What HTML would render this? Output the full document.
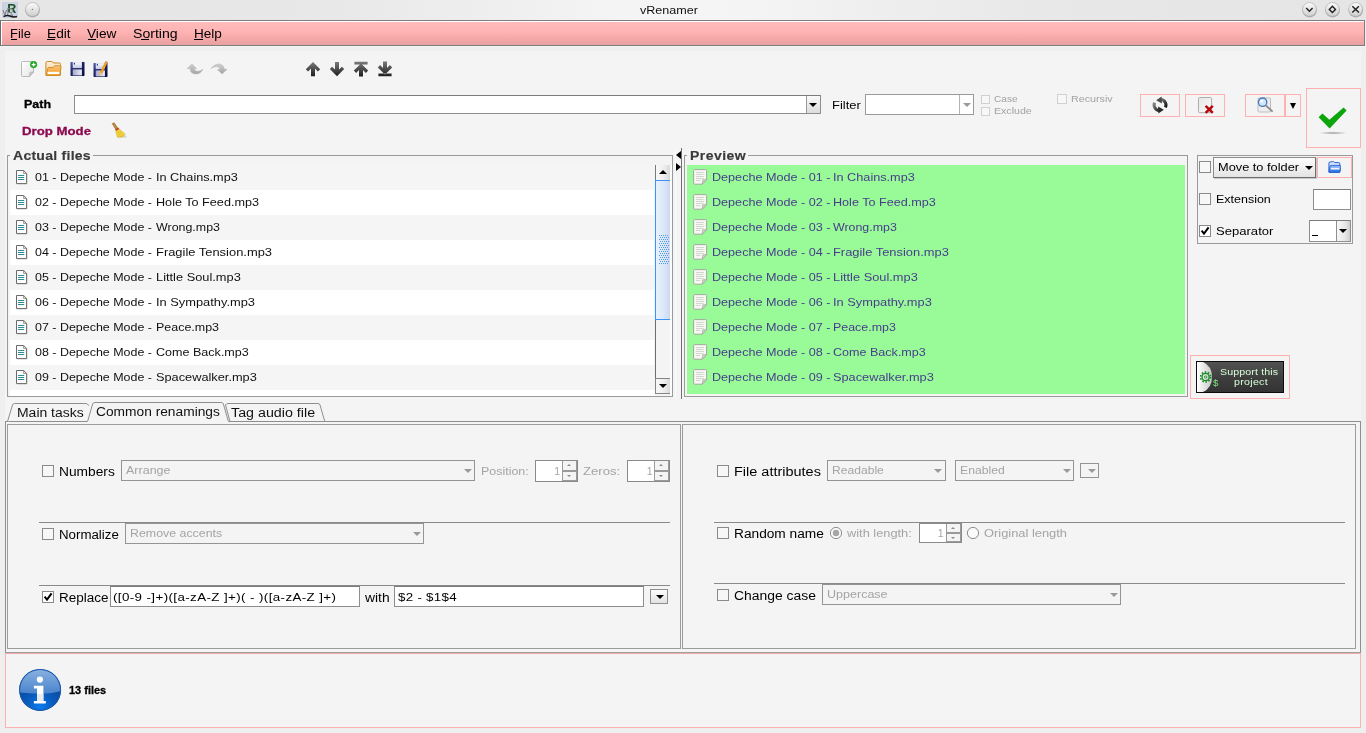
<!DOCTYPE html>
<html><head><meta charset="utf-8"><title>vRenamer</title>
<style>
html,body{margin:0;padding:0;}
body{width:1366px;height:733px;overflow:hidden;position:relative;background:#efefef;font-family:"Liberation Sans",sans-serif;font-size:12px;color:#000;}
div,span,svg{position:absolute;box-sizing:border-box;}
.t{white-space:pre;line-height:16px;height:16px;transform-origin:0 0;}
.u{text-decoration:underline;position:static;}
.cb{width:12px;height:12px;background:#f7f7f7;border:1px solid #8a8a8a;}
.cbd{width:10px;height:10px;background:#f7f7f7;border:1px solid #d0d0d0;}
.inp{background:#fff;border:1px solid #8e8e8e;border-top-color:#7c7c7c;}
.cmb{background:#f4f4f4;border:1px solid #949494;}
.pk{border:1px solid #ffb1b1;background:#f4f4f4;}
.sep{height:1px;background:#8a8a8a;}
.row{left:10px;width:644px;height:25px;}
.tri{width:0;height:0;border-left:4px solid transparent;border-right:4px solid transparent;border-top:4px solid #9a9a9a;}
.trib{width:0;height:0;border-left:4px solid transparent;border-right:4px solid transparent;border-top:4px solid #000;}

</style></head>
<body>
<div id="root" style="left:0;top:0;width:1366px;height:733px;will-change:transform;">
<div style="left:0px;top:0px;width:1366px;height:20px;background:linear-gradient(90deg,#e5e5e5 0,#e8e8e8 24%,#f5f5f5 47%,#f5f5f5 53%,#e8e8e8 76%,#e5e5e5 100%);"></div>
<span class="t" style="left:640.36px;top:2.02px;font-size:11.5px;font-weight:400;color:#111;transform:scaleX(1.0931);">vRenamer</span>
<svg style="left:2px;top:2px" width="16" height="16" viewBox="0 0 16 16">
<rect x="0" y="0" width="16" height="16" fill="#cdd1e4"/>
<text x="5.2" y="10.6" font-family="Liberation Sans" font-weight="700" font-size="12.5" fill="#14521f">R</text>
<text x="0.6" y="13.4" font-family="Liberation Sans" font-size="9" fill="#666">v</text>
<text x="4.6" y="14.2" font-family="Liberation Sans" font-size="10" fill="#8a8a8a">R</text>
<path d="M1.6 14.6 Q5 12.6 8 14 T15 14.6" stroke="#1a1a1a" stroke-width="1.5" fill="none"/>
</svg>
<svg style="left:23px;top:0px" width="19" height="19" viewBox="-9.40 -9.40 19 19">
<defs><linearGradient id="wg32" x1="0" y1="0" x2="0" y2="1"><stop offset="0" stop-color="#fbfbfb"/><stop offset="1" stop-color="#cfcfcf"/></linearGradient></defs>
<circle cx="0.2" cy="0.7" r="7.3" fill="#a8a8a8"/><circle cx="0" cy="0" r="6.9" fill="url(#wg32)" stroke="#b0b0b0" stroke-width="0.7"/><circle cx="0" cy="0" r="0.7" fill="#777"/></svg>
<svg style="left:1300px;top:0px" width="19" height="19" viewBox="-9.40 -9.40 19 19">
<defs><linearGradient id="wg1309" x1="0" y1="0" x2="0" y2="1"><stop offset="0" stop-color="#fbfbfb"/><stop offset="1" stop-color="#cfcfcf"/></linearGradient></defs>
<circle cx="0.2" cy="0.7" r="7.3" fill="#a8a8a8"/><circle cx="0" cy="0" r="6.9" fill="url(#wg1309)" stroke="#b0b0b0" stroke-width="0.7"/><path d="M-3.2 -1.4 L0 1.9 L3.2 -1.4" stroke="#222" stroke-width="1.4" fill="none"/></svg>
<svg style="left:1323px;top:0px" width="19" height="19" viewBox="-9.40 -9.40 19 19">
<defs><linearGradient id="wg1332" x1="0" y1="0" x2="0" y2="1"><stop offset="0" stop-color="#fbfbfb"/><stop offset="1" stop-color="#cfcfcf"/></linearGradient></defs>
<circle cx="0.2" cy="0.7" r="7.3" fill="#a8a8a8"/><circle cx="0" cy="0" r="6.9" fill="url(#wg1332)" stroke="#b0b0b0" stroke-width="0.7"/><path d="M0 -3.1 L3.1 0 L0 3.1 L-3.1 0 Z" stroke="#222" stroke-width="1.4" fill="none"/></svg>
<svg style="left:1346px;top:0px" width="19" height="19" viewBox="-9.60 -9.40 19 19">
<defs><linearGradient id="wg1355" x1="0" y1="0" x2="0" y2="1"><stop offset="0" stop-color="#fbfbfb"/><stop offset="1" stop-color="#cfcfcf"/></linearGradient></defs>
<circle cx="0.2" cy="0.7" r="7.3" fill="#a8a8a8"/><circle cx="0" cy="0" r="6.9" fill="url(#wg1355)" stroke="#b0b0b0" stroke-width="0.7"/><path d="M-3.3 -3.1 L3.3 3.1 M3.3 -3.1 L-3.3 3.1" stroke="#222" stroke-width="1.5" fill="none"/></svg>
<div style="left:0px;top:20px;width:1365px;height:26px;background:linear-gradient(#ffbcbc 0%,#ffb3b3 45%,#f2a6a6 80%,#e8a0a0 100%);border:1px solid #7d7d7d;border-left-color:#6a6a6a;"></div>
<div style="left:1px;top:21px;width:1363px;height:1px;background:#fff;"></div>
<div style="left:1px;top:21px;width:1px;height:24px;background:#fff;"></div>
<span class="t" style="left:9.85px;top:25.67px;font-size:12.5px;font-weight:400;color:#000;transform:scaleX(1.0357);">File</span>
<div style="left:10.5px;top:39px;width:6.5px;height:1px;background:#000;"></div>
<span class="t" style="left:46.62px;top:25.67px;font-size:12.5px;font-weight:400;color:#000;transform:scaleX(1.0988);">Edit</span>
<div style="left:47.3px;top:39px;width:7.5px;height:1px;background:#000;"></div>
<span class="t" style="left:87.12px;top:25.67px;font-size:12.5px;font-weight:400;color:#000;transform:scaleX(1.0930);">View</span>
<div style="left:87.8px;top:39px;width:8px;height:1px;background:#000;"></div>
<span class="t" style="left:133.01px;top:25.67px;font-size:12.5px;font-weight:400;color:#000;transform:scaleX(1.1279);">Sorting</span>
<div style="left:141.2px;top:39px;width:7.5px;height:1px;background:#000;"></div>
<span class="t" style="left:193.73px;top:25.67px;font-size:12.5px;font-weight:400;color:#000;transform:scaleX(1.0838);">Help</span>
<div style="left:194.4px;top:39px;width:8.5px;height:1px;background:#000;"></div>
<div style="left:0px;top:46px;width:1366px;height:5px;background:linear-gradient(#f5f5f5 0,#f5f5f5 20%,#efefef 21%,#efefef 100%);"></div>
<div style="left:5px;top:51px;width:1356px;height:677px;background:#f4f4f4;"></div>
<svg style="left:21px;top:61px" width="17" height="16" viewBox="0 0 17 16">
<defs><linearGradient id="pg1" x1="0" y1="0" x2="1" y2="1"><stop offset="0" stop-color="#ffffff"/><stop offset="1" stop-color="#e4e4e4"/></linearGradient></defs>
<path d="M0.5 1.5 Q0.5 0.5 1.5 0.5 H11.5 Q12.5 0.5 12.5 1.5 V11 L8.5 15.5 H1.5 Q0.5 15.5 0.5 14.5 Z" fill="url(#pg1)" stroke="#b9b9b9"/>
<path d="M12.5 11 L9 11.2 L8.5 15.5 Z" fill="#cfcfcf" stroke="#a8a8a8" stroke-width="0.6"/>
<circle cx="12.6" cy="3.6" r="3.3" fill="#1fb024" stroke="#168a1a" stroke-width="0.5"/>
<path d="M12.6 1.7 V5.5 M10.7 3.6 H14.5" stroke="#fff" stroke-width="1.2"/>
</svg>
<svg style="left:45px;top:60px" width="17" height="17" viewBox="0 0 17 17">
<defs><linearGradient id="fg0" x1="0" y1="0" x2="0" y2="1"><stop offset="0" stop-color="#fef1de"/><stop offset="1" stop-color="#f9c480"/></linearGradient>
<linearGradient id="fg1" x1="0" y1="0" x2="0" y2="1"><stop offset="0" stop-color="#fcc77c"/><stop offset="1" stop-color="#f7961a"/></linearGradient></defs>
<path d="M0.9 15.2 V3 Q0.9 1.5 2.3 1.5 H6.6 Q7.8 1.5 8.4 3 H14.4 Q15.5 3 15.5 4.2 V15.2 Z" fill="url(#fg0)" stroke="#c98a22" stroke-width="1"/>
<path d="M1.2 15.4 L2.7 8.4 Q2.9 7.6 3.8 7.6 L8 7.5 L9.8 5.8 H15.4 Q16.3 5.8 16.1 6.8 L15 14.6 Q14.9 15.4 14 15.4 Z" fill="url(#fg1)" stroke="#c98a22" stroke-width="0.9"/>
<rect x="2.6" y="11.8" width="11.8" height="2.3" fill="#ffffff"/>
</svg>
<svg style="left:69.6px;top:61.2px" width="16" height="17" viewBox="0 0 16 17">
<defs><linearGradient id="sv69_6" x1="0" y1="0" x2="1" y2="1"><stop offset="0" stop-color="#5560a6"/><stop offset="0.35" stop-color="#20286a"/><stop offset="1" stop-color="#090c3c"/></linearGradient>
<linearGradient id="sl69_6" x1="0" y1="0" x2="0" y2="1"><stop offset="0" stop-color="#ffffff"/><stop offset="1" stop-color="#c2c8e2"/></linearGradient>
<linearGradient id="sm69_6" x1="0" y1="0" x2="1" y2="0"><stop offset="0" stop-color="#a4a7cc"/><stop offset="1" stop-color="#eeeef7"/></linearGradient></defs>
<g transform="translate(0 0)">
<rect x="0.5" y="0.9" width="14" height="14" rx="0.7" fill="url(#sv69_6)"/>
<rect x="2.7" y="1.1" width="9.2" height="6" fill="url(#sl69_6)"/>
<rect x="3.8" y="1.8" width="1.2" height="1.7" fill="#27358a"/>
<rect x="2.7" y="8.4" width="9.2" height="6" fill="url(#sm69_6)"/></g></svg>
<svg style="left:92.6px;top:61.2px" width="16" height="17" viewBox="0 0 16 17">
<defs><linearGradient id="sv92_6" x1="0" y1="0" x2="1" y2="1"><stop offset="0" stop-color="#5560a6"/><stop offset="0.35" stop-color="#20286a"/><stop offset="1" stop-color="#090c3c"/></linearGradient>
<linearGradient id="sl92_6" x1="0" y1="0" x2="0" y2="1"><stop offset="0" stop-color="#ffffff"/><stop offset="1" stop-color="#c2c8e2"/></linearGradient>
<linearGradient id="sm92_6" x1="0" y1="0" x2="1" y2="0"><stop offset="0" stop-color="#a4a7cc"/><stop offset="1" stop-color="#eeeef7"/></linearGradient></defs>
<g transform="translate(0 1)">
<rect x="0.5" y="0.9" width="14" height="14" rx="0.7" fill="url(#sv92_6)"/>
<rect x="2.7" y="1.1" width="9.2" height="6" fill="url(#sl92_6)"/>
<rect x="3.8" y="1.8" width="1.2" height="1.7" fill="#27358a"/>
<rect x="2.7" y="8.4" width="9.2" height="6" fill="url(#sm92_6)"/></g><path d="M12.8 0.3 L14.6 1.2 L8.8 12.6 L6.6 14.2 L7 11.6 Z" fill="#f8a821" stroke="#c87f14" stroke-width="0.5"/><path d="M7 11.6 L8.8 12.6 L6.6 14.2 Z" fill="#f4dcb4"/><path d="M12.8 0.3 L14.6 1.2 L14 2.4 L12.2 1.5Z" fill="#ec8a70"/></svg>
<svg style="left:186px;top:62px" width="18" height="14" viewBox="0 0 18 14">
<defs><linearGradient id="ug" x1="0" y1="0" x2="0" y2="1"><stop offset="0" stop-color="#cfcfcf"/><stop offset="1" stop-color="#a4a4a4"/></linearGradient></defs>
<path d="M5.9 1.9 L10.7 6.6 H8.2 Q8.6 9.4 12 9.2 Q14.6 9 16.9 7.2 Q15.4 11 11.4 11.9 Q7 12.6 5 10 Q4.2 8.6 4.3 6.6 H1.1 Z" fill="url(#ug)" stroke="#b4b4b4" stroke-width="0.5"/></svg>
<svg style="left:210px;top:62px" width="18" height="14" viewBox="0 0 18 14">
<path d="M1.1 6.6 Q4 2.2 8.6 1.9 Q13.6 2 14.4 7.3 L17.1 7.2 L12.1 12 L7.3 7.6 L10.2 7.5 Q9.4 4.6 6.4 4.6 Q3.6 4.8 1.1 6.6 Z" fill="url(#ug)" stroke="#b4b4b4" stroke-width="0.5"/></svg>
<svg style="left:305px;top:61px" width="16" height="16" viewBox="0 0 16 16"><defs><linearGradient id="ag305" x1="0" y1="0" x2="0" y2="1"><stop offset="0" stop-color="#7a7a7a"/><stop offset="1" stop-color="#1e1e1e"/></linearGradient></defs><path d="M8 1 L15.2 8.2 L12.9 10.5 L10 7.6 V15.2 H6 V7.6 L3.1 10.5 L0.8 8.2 Z" fill="url(#ag305)"/></svg>
<svg style="left:329px;top:61px" width="16" height="16" viewBox="0 0 16 16"><defs><linearGradient id="ag329" x1="0" y1="0" x2="0" y2="1"><stop offset="0" stop-color="#7a7a7a"/><stop offset="1" stop-color="#1e1e1e"/></linearGradient></defs><path d="M8 15.2 L15.2 8 L12.9 5.7 L10 8.6 V1 H6 V8.6 L3.1 5.7 L0.8 8 Z" fill="url(#ag329)"/></svg>
<svg style="left:353px;top:61px" width="16" height="16" viewBox="0 0 16 16"><defs><linearGradient id="ag353" x1="0" y1="0" x2="0" y2="1"><stop offset="0" stop-color="#7a7a7a"/><stop offset="1" stop-color="#1e1e1e"/></linearGradient></defs><path d="M8 2.4 L15.2 9.6 L12.9 11.9 L10 9 V15.4 H6 V9 L3.1 11.9 L0.8 9.6 Z M1.4 0.8 H14.6 V3.4 H1.4 Z" fill="url(#ag353)"/></svg>
<svg style="left:377px;top:61px" width="16" height="16" viewBox="0 0 16 16"><defs><linearGradient id="ag377" x1="0" y1="0" x2="0" y2="1"><stop offset="0" stop-color="#7a7a7a"/><stop offset="1" stop-color="#1e1e1e"/></linearGradient></defs><path d="M8 13.6 L15.2 6.4 L12.9 4.1 L10 7 V0.6 H6 V7 L3.1 4.1 L0.8 6.4 Z M1.4 12.6 H14.6 V15.2 H1.4 Z" fill="url(#ag377)"/></svg>
<span class="t" style="left:23.86px;top:96.02px;font-size:11.5px;font-weight:700;color:#000;transform:scaleX(1.0836);-webkit-text-stroke:0.3px currentColor;">Path</span>
<div class="inp" style="left:74px;top:95px;width:747px;height:19px;"></div>
<div style="left:806px;top:96px;width:14px;height:17px;background:linear-gradient(#fafafa,#dcdcdc);border-left:1px solid #9a9a9a;"></div>
<div class="trib" style="left:809px;top:103px;width:0px;height:0px;"></div>
<span class="t" style="left:831.55px;top:96.52px;font-size:11.5px;font-weight:400;color:#000;transform:scaleX(1.1268);">Filter</span>
<div class="inp" style="left:865px;top:94px;width:109px;height:21px;background:#fff;border-color:#9a9a9a;"></div>
<div style="left:959px;top:95px;width:1px;height:19px;background:#b4b4b4;"></div>
<div class="tri" style="left:962.6px;top:102.8px;width:0px;height:0px;border-left-width:4.5px;border-right-width:4.5px;border-top-width:4.5px;"></div>
<div class="cbd" style="left:980.5px;top:94.5px;width:9px;height:9px;"></div>
<span class="t" style="left:994.15px;top:90.71px;font-size:9.5px;font-weight:400;color:#a2a2a2;transform:scaleX(1.0666);">Case</span>
<div class="cbd" style="left:980.5px;top:106.5px;width:9px;height:9px;"></div>
<span class="t" style="left:994.13px;top:102.71px;font-size:9.5px;font-weight:400;color:#a2a2a2;transform:scaleX(1.1139);">Exclude</span>
<div class="cbd" style="left:1057px;top:94px;width:10px;height:10px;"></div>
<span class="t" style="left:1071.03px;top:91.21px;font-size:9.5px;font-weight:400;color:#a2a2a2;transform:scaleX(1.1275);">Recursiv</span>
<div class="pk" style="left:1140px;top:94px;width:40px;height:23px;"></div>
<div class="pk" style="left:1185px;top:94px;width:40px;height:23px;"></div>
<div class="pk" style="left:1245px;top:94px;width:40px;height:23px;"></div>
<div class="pk" style="left:1285px;top:94px;width:16px;height:23px;"></div>
<div class="pk" style="left:1306px;top:88px;width:55px;height:60px;"></div>
<svg style="left:1152px;top:96px" width="16" height="18" viewBox="0 0 16 18">
<defs><linearGradient id="rf" x1="0" y1="0" x2="1" y2="1"><stop offset="0" stop-color="#7c7c7c"/><stop offset="1" stop-color="#141414"/></linearGradient>
<linearGradient id="rf2" x1="0" y1="0" x2="1" y2="1"><stop offset="0" stop-color="#8a8a8a"/><stop offset="1" stop-color="#1e1e1e"/></linearGradient></defs>
<g fill="none" stroke-width="3.1">
<path d="M13.4 11.4 A5.6 5.6 0 0 0 8.8 3.5" stroke="url(#rf)"/>
<path d="M2.6 6.6 A5.6 5.6 0 0 0 7.2 14.5" stroke="url(#rf2)"/></g>
<path d="M4.2 4.3 L9.6 0.6 L9.9 7.4 Z" fill="#4a4a4a"/>
<path d="M11.8 13.7 L6.4 17.4 L6.1 10.6 Z" fill="#2a2a2a"/>
</svg>
<svg style="left:1198px;top:97px" width="16" height="17" viewBox="0 0 16 17">
<defs><linearGradient id="dp" x1="0" y1="0" x2="1" y2="1"><stop offset="0" stop-color="#e6e6e6"/><stop offset="1" stop-color="#fbfbfb"/></linearGradient></defs><path d="M0.5 1.7 Q0.5 0.5 1.7 0.5 H12.4 Q13.6 0.5 13.6 1.7 V14.5 Q13.6 15.7 12.4 15.7 H1.7 Q0.5 15.7 0.5 14.5 Z" fill="url(#dp)" stroke="#adadad"/>
<path d="M7.6 8.8 L14.8 15.8 M14.8 8.8 L7.6 15.8" stroke="#b8080e" stroke-width="2.5"/></svg>
<svg style="left:1257px;top:97px" width="17" height="17" viewBox="0 0 17 17">
<path d="M1 2 Q1 1 2 1 H12.5 Q13.5 1 13.5 2 V14 Q13.5 15 12.5 15 H2 Q1 15 1 14 Z" fill="#eeeeee" stroke="#bdbdbd"/>
<path d="M9 8.6 L15.6 14.6" stroke="#8a8a8a" stroke-width="1.8"/>
<circle cx="5.6" cy="5.2" r="4.2" fill="#cfe6fb" stroke="#4a78b8" stroke-width="1.3"/>
<circle cx="4.6" cy="4" r="1.6" fill="#ffffff" opacity="0.8"/></svg>
<div class="trib" style="left:1289.8px;top:103px;width:0px;height:0px;border-left-width:3.5px;border-right-width:3.5px;border-top-width:6px;"></div>
<svg style="left:1316px;top:104px" width="34" height="32" viewBox="0 0 34 32">
<defs><radialGradient id="sh" cx="0.5" cy="0.5" r="0.5"><stop offset="0" stop-color="#777" stop-opacity="0.7"/><stop offset="1" stop-color="#777" stop-opacity="0"/></radialGradient></defs>
<ellipse cx="17" cy="29" rx="14" ry="1.6" fill="url(#sh)"/>
<path d="M2.6 13.2 L6.4 9.4 L13.4 15.8 L27.6 3.6 L30.6 6.6 L13.6 24.4 Z" fill="#0ca60c"/></svg>
<span class="t" style="left:21.84px;top:123.02px;font-size:11.5px;font-weight:700;color:#8b0a50;transform:scaleX(1.1489);-webkit-text-stroke:0.3px currentColor;">Drop Mode</span>
<svg style="left:110px;top:122px" width="18" height="17" viewBox="0 0 18 17">
<ellipse cx="12.6" cy="14.6" rx="4.4" ry="1.2" fill="#9a9a9a" opacity="0.35"/>
<path d="M2.2 1.6 L4.2 0.8 L8.4 7 L6.2 8.2 Z" fill="#c08a3c" stroke="#8a5a1c" stroke-width="0.5"/>
<path d="M5.6 8.4 L8.6 6.6 L15.2 12.2 L13.4 14.2 L10.4 15.2 L7.4 15.2 Z" fill="#f2d43c" stroke="#c8a018" stroke-width="0.5"/>
<path d="M8 9.6 L10.6 14.8 M9.4 9 L13 13.8" stroke="#d8b422" stroke-width="0.6"/>
<path d="M5.2 7.4 L8.2 5.6 L9.2 7 L6.2 8.8 Z" fill="#d0342a"/></svg>
<div style="left:7px;top:155px;width:666px;height:242px;border:1px solid #9a9a9a;"></div><div style="left:10.2px;top:153px;width:82.8px;height:5px;background:#f4f4f4;"></div><span class="t" style="left:12.71px;top:148.01px;font-size:12.1px;font-weight:700;color:#3a3a3a;transform:scaleX(1.1600);letter-spacing:0.219px;-webkit-text-stroke:0.15px currentColor;">Actual files</span>
<div style="left:10px;top:165px;width:644px;height:25px;background:#f5f5f5;"></div>
<svg style="left:16px;top:170px" width="12" height="15" viewBox="0 0 12 15">
<path d="M0.5 0.5 H7.6 L10.5 3.4 V13.5 H0.5 Z" fill="#fdfdfd" stroke="#6a6a6a"/>
<path d="M0.8 13.9 H10.9 V3.6" fill="none" stroke="#8a8a8a" stroke-width="0.6"/>
<path d="M7.6 0.5 V3.4 H10.5 Z" fill="#f6f2cf" stroke="#6a6a6a" stroke-width="0.7"/>
<path d="M2 5.5 H8.2 M2 7.5 H8.2 M2 9.5 H8.2" stroke="#2a8c96" stroke-width="1"/></svg>
<span class="t" style="left:35.36px;top:169.02px;font-size:11.5px;font-weight:400;color:#111;transform:scaleX(1.0829);">01 - Depeche Mode -</span>
<span class="t" style="left:155.76px;top:169.02px;font-size:11.5px;font-weight:400;color:#111;transform:scaleX(1.1031);">In Chains.mp3</span>
<div style="left:10px;top:190px;width:644px;height:25px;background:#ffffff;"></div>
<svg style="left:16px;top:195px" width="12" height="15" viewBox="0 0 12 15">
<path d="M0.5 0.5 H7.6 L10.5 3.4 V13.5 H0.5 Z" fill="#fdfdfd" stroke="#6a6a6a"/>
<path d="M0.8 13.9 H10.9 V3.6" fill="none" stroke="#8a8a8a" stroke-width="0.6"/>
<path d="M7.6 0.5 V3.4 H10.5 Z" fill="#f6f2cf" stroke="#6a6a6a" stroke-width="0.7"/>
<path d="M2 5.5 H8.2 M2 7.5 H8.2 M2 9.5 H8.2" stroke="#2a8c96" stroke-width="1"/></svg>
<span class="t" style="left:35.36px;top:194.02px;font-size:11.5px;font-weight:400;color:#111;transform:scaleX(1.0829);">02 - Depeche Mode -</span>
<span class="t" style="left:155.76px;top:194.02px;font-size:11.5px;font-weight:400;color:#111;transform:scaleX(1.0985);">Hole To Feed.mp3</span>
<div style="left:10px;top:215px;width:644px;height:25px;background:#f5f5f5;"></div>
<svg style="left:16px;top:220px" width="12" height="15" viewBox="0 0 12 15">
<path d="M0.5 0.5 H7.6 L10.5 3.4 V13.5 H0.5 Z" fill="#fdfdfd" stroke="#6a6a6a"/>
<path d="M0.8 13.9 H10.9 V3.6" fill="none" stroke="#8a8a8a" stroke-width="0.6"/>
<path d="M7.6 0.5 V3.4 H10.5 Z" fill="#f6f2cf" stroke="#6a6a6a" stroke-width="0.7"/>
<path d="M2 5.5 H8.2 M2 7.5 H8.2 M2 9.5 H8.2" stroke="#2a8c96" stroke-width="1"/></svg>
<span class="t" style="left:35.36px;top:219.02px;font-size:11.5px;font-weight:400;color:#111;transform:scaleX(1.0829);">03 - Depeche Mode -</span>
<span class="t" style="left:155.77px;top:219.02px;font-size:11.5px;font-weight:400;color:#111;transform:scaleX(1.0805);">Wrong.mp3</span>
<div style="left:10px;top:240px;width:644px;height:25px;background:#ffffff;"></div>
<svg style="left:16px;top:245px" width="12" height="15" viewBox="0 0 12 15">
<path d="M0.5 0.5 H7.6 L10.5 3.4 V13.5 H0.5 Z" fill="#fdfdfd" stroke="#6a6a6a"/>
<path d="M0.8 13.9 H10.9 V3.6" fill="none" stroke="#8a8a8a" stroke-width="0.6"/>
<path d="M7.6 0.5 V3.4 H10.5 Z" fill="#f6f2cf" stroke="#6a6a6a" stroke-width="0.7"/>
<path d="M2 5.5 H8.2 M2 7.5 H8.2 M2 9.5 H8.2" stroke="#2a8c96" stroke-width="1"/></svg>
<span class="t" style="left:35.36px;top:244.02px;font-size:11.5px;font-weight:400;color:#111;transform:scaleX(1.0829);">04 - Depeche Mode -</span>
<span class="t" style="left:155.75px;top:244.02px;font-size:11.5px;font-weight:400;color:#111;transform:scaleX(1.1225);">Fragile Tension.mp3</span>
<div style="left:10px;top:265px;width:644px;height:25px;background:#f5f5f5;"></div>
<svg style="left:16px;top:270px" width="12" height="15" viewBox="0 0 12 15">
<path d="M0.5 0.5 H7.6 L10.5 3.4 V13.5 H0.5 Z" fill="#fdfdfd" stroke="#6a6a6a"/>
<path d="M0.8 13.9 H10.9 V3.6" fill="none" stroke="#8a8a8a" stroke-width="0.6"/>
<path d="M7.6 0.5 V3.4 H10.5 Z" fill="#f6f2cf" stroke="#6a6a6a" stroke-width="0.7"/>
<path d="M2 5.5 H8.2 M2 7.5 H8.2 M2 9.5 H8.2" stroke="#2a8c96" stroke-width="1"/></svg>
<span class="t" style="left:35.36px;top:269.02px;font-size:11.5px;font-weight:400;color:#111;transform:scaleX(1.0829);">05 - Depeche Mode -</span>
<span class="t" style="left:155.75px;top:269.02px;font-size:11.5px;font-weight:400;color:#111;transform:scaleX(1.1147);">Little Soul.mp3</span>
<div style="left:10px;top:290px;width:644px;height:25px;background:#ffffff;"></div>
<svg style="left:16px;top:295px" width="12" height="15" viewBox="0 0 12 15">
<path d="M0.5 0.5 H7.6 L10.5 3.4 V13.5 H0.5 Z" fill="#fdfdfd" stroke="#6a6a6a"/>
<path d="M0.8 13.9 H10.9 V3.6" fill="none" stroke="#8a8a8a" stroke-width="0.6"/>
<path d="M7.6 0.5 V3.4 H10.5 Z" fill="#f6f2cf" stroke="#6a6a6a" stroke-width="0.7"/>
<path d="M2 5.5 H8.2 M2 7.5 H8.2 M2 9.5 H8.2" stroke="#2a8c96" stroke-width="1"/></svg>
<span class="t" style="left:35.36px;top:294.02px;font-size:11.5px;font-weight:400;color:#111;transform:scaleX(1.0829);">06 - Depeche Mode -</span>
<span class="t" style="left:155.75px;top:294.02px;font-size:11.5px;font-weight:400;color:#111;transform:scaleX(1.1169);">In Sympathy.mp3</span>
<div style="left:10px;top:315px;width:644px;height:25px;background:#f5f5f5;"></div>
<svg style="left:16px;top:320px" width="12" height="15" viewBox="0 0 12 15">
<path d="M0.5 0.5 H7.6 L10.5 3.4 V13.5 H0.5 Z" fill="#fdfdfd" stroke="#6a6a6a"/>
<path d="M0.8 13.9 H10.9 V3.6" fill="none" stroke="#8a8a8a" stroke-width="0.6"/>
<path d="M7.6 0.5 V3.4 H10.5 Z" fill="#f6f2cf" stroke="#6a6a6a" stroke-width="0.7"/>
<path d="M2 5.5 H8.2 M2 7.5 H8.2 M2 9.5 H8.2" stroke="#2a8c96" stroke-width="1"/></svg>
<span class="t" style="left:35.36px;top:319.02px;font-size:11.5px;font-weight:400;color:#111;transform:scaleX(1.0829);">07 - Depeche Mode -</span>
<span class="t" style="left:155.76px;top:319.02px;font-size:11.5px;font-weight:400;color:#111;transform:scaleX(1.0828);">Peace.mp3</span>
<div style="left:10px;top:340px;width:644px;height:25px;background:#ffffff;"></div>
<svg style="left:16px;top:345px" width="12" height="15" viewBox="0 0 12 15">
<path d="M0.5 0.5 H7.6 L10.5 3.4 V13.5 H0.5 Z" fill="#fdfdfd" stroke="#6a6a6a"/>
<path d="M0.8 13.9 H10.9 V3.6" fill="none" stroke="#8a8a8a" stroke-width="0.6"/>
<path d="M7.6 0.5 V3.4 H10.5 Z" fill="#f6f2cf" stroke="#6a6a6a" stroke-width="0.7"/>
<path d="M2 5.5 H8.2 M2 7.5 H8.2 M2 9.5 H8.2" stroke="#2a8c96" stroke-width="1"/></svg>
<span class="t" style="left:35.36px;top:344.02px;font-size:11.5px;font-weight:400;color:#111;transform:scaleX(1.0829);">08 - Depeche Mode -</span>
<span class="t" style="left:155.76px;top:344.02px;font-size:11.5px;font-weight:400;color:#111;transform:scaleX(1.0916);">Come Back.mp3</span>
<div style="left:10px;top:365px;width:644px;height:25px;background:#f5f5f5;"></div>
<svg style="left:16px;top:370px" width="12" height="15" viewBox="0 0 12 15">
<path d="M0.5 0.5 H7.6 L10.5 3.4 V13.5 H0.5 Z" fill="#fdfdfd" stroke="#6a6a6a"/>
<path d="M0.8 13.9 H10.9 V3.6" fill="none" stroke="#8a8a8a" stroke-width="0.6"/>
<path d="M7.6 0.5 V3.4 H10.5 Z" fill="#f6f2cf" stroke="#6a6a6a" stroke-width="0.7"/>
<path d="M2 5.5 H8.2 M2 7.5 H8.2 M2 9.5 H8.2" stroke="#2a8c96" stroke-width="1"/></svg>
<span class="t" style="left:35.36px;top:369.02px;font-size:11.5px;font-weight:400;color:#111;transform:scaleX(1.0829);">09 - Depeche Mode -</span>
<span class="t" style="left:155.75px;top:369.02px;font-size:11.5px;font-weight:400;color:#111;transform:scaleX(1.1104);">Spacewalker.mp3</span>
<div style="left:10px;top:390px;width:645px;height:6px;background:#ffffff;"></div>
<div style="left:655px;top:165px;width:15px;height:229px;background:#f4f4f4;border-left:1px solid #6e6e6e;"></div>
<div style="left:670px;top:165px;width:2px;height:231px;background:#fbfbfb;"></div>
<div style="left:655px;top:165px;width:15px;height:15px;background:linear-gradient(90deg,#f8f8f8,#f0f0f0 50%,#d9d9d9);border-left:1px solid #7a7a7a;"></div>
<div style="left:658.8px;top:169.8px;width:0px;height:0px;border-left:4.2px solid transparent;border-right:4.2px solid transparent;border-bottom:4.4px solid #000;"></div>
<div style="left:655px;top:180px;width:15px;height:140px;background:linear-gradient(90deg,#e9f2fd,#dde9f9 50%,#ccd9ee);border:1px solid #3b93f5;border-right:none;"></div>
<svg style="left:659px;top:235px" width="10" height="30" viewBox="0 0 10 30"><defs><pattern id="gp" width="2" height="4" patternUnits="userSpaceOnUse"><rect x="0" y="0" width="1" height="1" fill="#4c9bf0"/><rect x="1" y="2" width="1" height="1" fill="#4c9bf0"/></pattern></defs><rect width="10" height="30" fill="url(#gp)"/></svg>
<div style="left:655px;top:378px;width:15px;height:16px;background:linear-gradient(90deg,#f8f8f8,#f0f0f0 50%,#d9d9d9);border:1px solid #858585;border-right:none;"></div>
<div style="left:658.8px;top:384px;width:0px;height:0px;border-left:4.2px solid transparent;border-right:4.2px solid transparent;border-top:4.6px solid #000;"></div>
<div style="left:681px;top:148px;width:1px;height:251px;background:#707070;"></div>
<div style="left:675px;top:148px;width:1px;height:251px;background:#fbfbfb;"></div>
<div style="left:676px;top:151px;width:0px;height:0px;border-top:4.5px solid transparent;border-bottom:4.5px solid transparent;border-right:5.2px solid #000;"></div>
<div style="left:676px;top:162.9px;width:0px;height:0px;border-top:4.5px solid transparent;border-bottom:4.5px solid transparent;border-left:5px solid #000;"></div>
<div style="left:684px;top:155px;width:504px;height:242px;border:1px solid #9a9a9a;"></div><div style="left:687.2px;top:153px;width:60.799999999999955px;height:5px;background:#f4f4f4;"></div><span class="t" style="left:689.71px;top:148.01px;font-size:12.1px;font-weight:700;color:#3a3a3a;transform:scaleX(1.1600);letter-spacing:0.375px;-webkit-text-stroke:0.15px currentColor;">Preview</span>
<div style="left:687px;top:165px;width:498px;height:229px;background:#98fb98;"></div>
<svg style="left:692.5px;top:168.5px" width="15" height="17" viewBox="0 0 15 17">
<path d="M1.6 0.6 H12.6 Q13.6 0.6 13.6 1.6 V10.6 L9.2 15.2 H1.6 Q0.6 15.2 0.6 14.2 V1.6 Q0.6 0.6 1.6 0.6 Z" fill="#f7f7f4" stroke="#a2a89a" stroke-width="1"/>
<path d="M13.6 10.6 L9.8 10.8 L9.2 15.2 Z" fill="#d4d6cc" stroke="#a2a89a" stroke-width="0.7"/>
<path d="M3 3.5 H11 M3 5.5 H10.4 M3 7.5 H11 M3 9.5 H10.6 M3 11.5 H7.4" stroke="#cfd1ca" stroke-width="0.9"/></svg>
<span class="t" style="left:711.76px;top:169.02px;font-size:11.5px;font-weight:400;color:#483d8b;transform:scaleX(1.0959);">Depeche Mode - 01 -</span>
<span class="t" style="left:832.76px;top:169.02px;font-size:11.5px;font-weight:400;color:#483d8b;transform:scaleX(1.1031);">In Chains.mp3</span>
<svg style="left:692.5px;top:193.5px" width="15" height="17" viewBox="0 0 15 17">
<path d="M1.6 0.6 H12.6 Q13.6 0.6 13.6 1.6 V10.6 L9.2 15.2 H1.6 Q0.6 15.2 0.6 14.2 V1.6 Q0.6 0.6 1.6 0.6 Z" fill="#f7f7f4" stroke="#a2a89a" stroke-width="1"/>
<path d="M13.6 10.6 L9.8 10.8 L9.2 15.2 Z" fill="#d4d6cc" stroke="#a2a89a" stroke-width="0.7"/>
<path d="M3 3.5 H11 M3 5.5 H10.4 M3 7.5 H11 M3 9.5 H10.6 M3 11.5 H7.4" stroke="#cfd1ca" stroke-width="0.9"/></svg>
<span class="t" style="left:711.76px;top:194.02px;font-size:11.5px;font-weight:400;color:#483d8b;transform:scaleX(1.0959);">Depeche Mode - 02 -</span>
<span class="t" style="left:832.76px;top:194.02px;font-size:11.5px;font-weight:400;color:#483d8b;transform:scaleX(1.0964);">Hole To Feed.mp3</span>
<svg style="left:692.5px;top:218.5px" width="15" height="17" viewBox="0 0 15 17">
<path d="M1.6 0.6 H12.6 Q13.6 0.6 13.6 1.6 V10.6 L9.2 15.2 H1.6 Q0.6 15.2 0.6 14.2 V1.6 Q0.6 0.6 1.6 0.6 Z" fill="#f7f7f4" stroke="#a2a89a" stroke-width="1"/>
<path d="M13.6 10.6 L9.8 10.8 L9.2 15.2 Z" fill="#d4d6cc" stroke="#a2a89a" stroke-width="0.7"/>
<path d="M3 3.5 H11 M3 5.5 H10.4 M3 7.5 H11 M3 9.5 H10.6 M3 11.5 H7.4" stroke="#cfd1ca" stroke-width="0.9"/></svg>
<span class="t" style="left:711.76px;top:219.02px;font-size:11.5px;font-weight:400;color:#483d8b;transform:scaleX(1.0959);">Depeche Mode - 03 -</span>
<span class="t" style="left:832.77px;top:219.02px;font-size:11.5px;font-weight:400;color:#483d8b;transform:scaleX(1.0772);">Wrong.mp3</span>
<svg style="left:692.5px;top:243.5px" width="15" height="17" viewBox="0 0 15 17">
<path d="M1.6 0.6 H12.6 Q13.6 0.6 13.6 1.6 V10.6 L9.2 15.2 H1.6 Q0.6 15.2 0.6 14.2 V1.6 Q0.6 0.6 1.6 0.6 Z" fill="#f7f7f4" stroke="#a2a89a" stroke-width="1"/>
<path d="M13.6 10.6 L9.8 10.8 L9.2 15.2 Z" fill="#d4d6cc" stroke="#a2a89a" stroke-width="0.7"/>
<path d="M3 3.5 H11 M3 5.5 H10.4 M3 7.5 H11 M3 9.5 H10.6 M3 11.5 H7.4" stroke="#cfd1ca" stroke-width="0.9"/></svg>
<span class="t" style="left:711.76px;top:244.02px;font-size:11.5px;font-weight:400;color:#483d8b;transform:scaleX(1.0959);">Depeche Mode - 04 -</span>
<span class="t" style="left:832.75px;top:244.02px;font-size:11.5px;font-weight:400;color:#483d8b;transform:scaleX(1.1206);">Fragile Tension.mp3</span>
<svg style="left:692.5px;top:268.5px" width="15" height="17" viewBox="0 0 15 17">
<path d="M1.6 0.6 H12.6 Q13.6 0.6 13.6 1.6 V10.6 L9.2 15.2 H1.6 Q0.6 15.2 0.6 14.2 V1.6 Q0.6 0.6 1.6 0.6 Z" fill="#f7f7f4" stroke="#a2a89a" stroke-width="1"/>
<path d="M13.6 10.6 L9.8 10.8 L9.2 15.2 Z" fill="#d4d6cc" stroke="#a2a89a" stroke-width="0.7"/>
<path d="M3 3.5 H11 M3 5.5 H10.4 M3 7.5 H11 M3 9.5 H10.6 M3 11.5 H7.4" stroke="#cfd1ca" stroke-width="0.9"/></svg>
<span class="t" style="left:711.76px;top:269.02px;font-size:11.5px;font-weight:400;color:#483d8b;transform:scaleX(1.0959);">Depeche Mode - 05 -</span>
<span class="t" style="left:832.75px;top:269.02px;font-size:11.5px;font-weight:400;color:#483d8b;transform:scaleX(1.1147);">Little Soul.mp3</span>
<svg style="left:692.5px;top:293.5px" width="15" height="17" viewBox="0 0 15 17">
<path d="M1.6 0.6 H12.6 Q13.6 0.6 13.6 1.6 V10.6 L9.2 15.2 H1.6 Q0.6 15.2 0.6 14.2 V1.6 Q0.6 0.6 1.6 0.6 Z" fill="#f7f7f4" stroke="#a2a89a" stroke-width="1"/>
<path d="M13.6 10.6 L9.8 10.8 L9.2 15.2 Z" fill="#d4d6cc" stroke="#a2a89a" stroke-width="0.7"/>
<path d="M3 3.5 H11 M3 5.5 H10.4 M3 7.5 H11 M3 9.5 H10.6 M3 11.5 H7.4" stroke="#cfd1ca" stroke-width="0.9"/></svg>
<span class="t" style="left:711.76px;top:294.02px;font-size:11.5px;font-weight:400;color:#483d8b;transform:scaleX(1.0959);">Depeche Mode - 06 -</span>
<span class="t" style="left:832.75px;top:294.02px;font-size:11.5px;font-weight:400;color:#483d8b;transform:scaleX(1.1147);">In Sympathy.mp3</span>
<svg style="left:692.5px;top:318.5px" width="15" height="17" viewBox="0 0 15 17">
<path d="M1.6 0.6 H12.6 Q13.6 0.6 13.6 1.6 V10.6 L9.2 15.2 H1.6 Q0.6 15.2 0.6 14.2 V1.6 Q0.6 0.6 1.6 0.6 Z" fill="#f7f7f4" stroke="#a2a89a" stroke-width="1"/>
<path d="M13.6 10.6 L9.8 10.8 L9.2 15.2 Z" fill="#d4d6cc" stroke="#a2a89a" stroke-width="0.7"/>
<path d="M3 3.5 H11 M3 5.5 H10.4 M3 7.5 H11 M3 9.5 H10.6 M3 11.5 H7.4" stroke="#cfd1ca" stroke-width="0.9"/></svg>
<span class="t" style="left:711.76px;top:319.02px;font-size:11.5px;font-weight:400;color:#483d8b;transform:scaleX(1.0959);">Depeche Mode - 07 -</span>
<span class="t" style="left:832.77px;top:319.02px;font-size:11.5px;font-weight:400;color:#483d8b;transform:scaleX(1.0794);">Peace.mp3</span>
<svg style="left:692.5px;top:343.5px" width="15" height="17" viewBox="0 0 15 17">
<path d="M1.6 0.6 H12.6 Q13.6 0.6 13.6 1.6 V10.6 L9.2 15.2 H1.6 Q0.6 15.2 0.6 14.2 V1.6 Q0.6 0.6 1.6 0.6 Z" fill="#f7f7f4" stroke="#a2a89a" stroke-width="1"/>
<path d="M13.6 10.6 L9.8 10.8 L9.2 15.2 Z" fill="#d4d6cc" stroke="#a2a89a" stroke-width="0.7"/>
<path d="M3 3.5 H11 M3 5.5 H10.4 M3 7.5 H11 M3 9.5 H10.6 M3 11.5 H7.4" stroke="#cfd1ca" stroke-width="0.9"/></svg>
<span class="t" style="left:711.76px;top:344.02px;font-size:11.5px;font-weight:400;color:#483d8b;transform:scaleX(1.0959);">Depeche Mode - 08 -</span>
<span class="t" style="left:832.76px;top:344.02px;font-size:11.5px;font-weight:400;color:#483d8b;transform:scaleX(1.0916);">Come Back.mp3</span>
<svg style="left:692.5px;top:368.5px" width="15" height="17" viewBox="0 0 15 17">
<path d="M1.6 0.6 H12.6 Q13.6 0.6 13.6 1.6 V10.6 L9.2 15.2 H1.6 Q0.6 15.2 0.6 14.2 V1.6 Q0.6 0.6 1.6 0.6 Z" fill="#f7f7f4" stroke="#a2a89a" stroke-width="1"/>
<path d="M13.6 10.6 L9.8 10.8 L9.2 15.2 Z" fill="#d4d6cc" stroke="#a2a89a" stroke-width="0.7"/>
<path d="M3 3.5 H11 M3 5.5 H10.4 M3 7.5 H11 M3 9.5 H10.6 M3 11.5 H7.4" stroke="#cfd1ca" stroke-width="0.9"/></svg>
<span class="t" style="left:711.76px;top:369.02px;font-size:11.5px;font-weight:400;color:#483d8b;transform:scaleX(1.0959);">Depeche Mode - 09 -</span>
<span class="t" style="left:832.75px;top:369.02px;font-size:11.5px;font-weight:400;color:#483d8b;transform:scaleX(1.1104);">Spacewalker.mp3</span>
<div style="left:1197px;top:155px;width:156px;height:89px;border:1px solid #9a9a9a;"></div>
<div class="cb" style="left:1199px;top:161px;width:12px;height:12px;"></div>
<div style="left:1213px;top:157px;width:103px;height:21px;background:linear-gradient(#fcfcfc,#e4e4e4);border:1px solid #8c8c8c;border-bottom-color:#6e6e6e;border-right-color:#6e6e6e;box-shadow:1px 1px 0 #c8c8c8;"></div>
<span class="t" style="left:1217.85px;top:159.02px;font-size:11.5px;font-weight:400;color:#000;transform:scaleX(1.1116);">Move to folder</span>
<div class="trib" style="left:1304.5px;top:166px;width:0px;height:0px;"></div>
<div class="pk" style="left:1317px;top:157px;width:35px;height:21px;"></div>
<svg style="left:1327.6px;top:161px" width="13.6" height="12.4" viewBox="0 0 15 14" preserveAspectRatio="none">
<defs><linearGradient id="bf" x1="0" y1="0" x2="0" y2="1"><stop offset="0" stop-color="#8fc0ff"/><stop offset="1" stop-color="#1f66dd"/></linearGradient></defs>
<path d="M1 12.6 V2.4 Q1 1.2 2.2 1.2 L5 0.6 Q6.4 0.4 7.4 1.8 H12 Q13 1.8 13 3 V5" fill="#cfe2ff" stroke="#1d55c4" stroke-width="1"/>
<path d="M1 12.8 L2.2 5.8 Q2.4 5 3.4 5 H13.4 Q14.4 5 14.2 6 L13.4 12 Q13.2 13 12.2 13 H1.4 Z" fill="url(#bf)" stroke="#1d55c4" stroke-width="0.9"/>
<rect x="3" y="7.6" width="9.6" height="2" fill="#eef5ff"/></svg>
<div class="cb" style="left:1199px;top:193px;width:12px;height:12px;"></div>
<span class="t" style="left:1215.76px;top:190.82px;font-size:11.5px;font-weight:400;color:#000;transform:scaleX(1.0849);">Extension</span>
<div class="inp" style="left:1313px;top:189px;width:38px;height:21px;"></div>
<div class="cb" style="left:1199px;top:225px;width:12px;height:12px;background:#fff;"></div>
<svg style="left:1200px;top:226px" width="10" height="10" viewBox="0 0 10 10"><path d="M1.6 4.6 L4 7.6 L8.6 1.4" stroke="#000" stroke-width="2" fill="none"/></svg>
<span class="t" style="left:1215.74px;top:222.82px;font-size:11.5px;font-weight:400;color:#000;transform:scaleX(1.1364);">Separator</span>
<div class="inp" style="left:1309px;top:220px;width:42px;height:22px;"></div>
<div style="left:1336px;top:221px;width:14px;height:20px;background:linear-gradient(90deg,#f6f6f6,#e9e9e9 60%,#cfcfcf);border-left:1px solid #8e8e8e;"></div>
<div class="trib" style="left:1339px;top:229px;width:0px;height:0px;"></div>
<div style="left:1312.4px;top:235.2px;width:6px;height:1.2px;background:#000;"></div>
<div class="pk" style="left:1190px;top:355px;width:100px;height:43.5px;"></div>
<div style="left:1196px;top:361px;width:88px;height:32px;background:linear-gradient(#525252,#3e3e3e 55%,#333333);border:1px solid #0c0c0c;"></div>
<svg style="left:1197px;top:362px" width="26" height="30" viewBox="0 0 26 30">
<defs><linearGradient id="sg" x1="0" y1="0" x2="1" y2="0"><stop offset="0" stop-color="#ffffff"/><stop offset="1" stop-color="#c8c8c8"/></linearGradient></defs>
<path d="M0 0 H6 Q15 4 15 15 Q15 26 6 30 H0 Z" fill="url(#sg)"/>
<circle cx="8.6" cy="15" r="3.6" fill="none" stroke="#0f8a1c" stroke-width="1.3"/>
<circle cx="8.6" cy="15" r="5" fill="none" stroke="#0f8a1c" stroke-width="1.6" stroke-dasharray="1.6 1.55"/>
<circle cx="8.6" cy="15" r="1.2" fill="none" stroke="#0f8a1c" stroke-width="0.8"/>
<text x="16" y="24.4" font-family="Liberation Sans" font-size="9.6" fill="#7fe87f">$</text></svg>
<span class="t" style="left:1220.23px;top:363.61px;font-size:9.2px;font-weight:400;color:#d8ffd8;transform:scaleX(1.1600);letter-spacing:0.092px;">Support this</span>
<span class="t" style="left:1233.63px;top:374.41px;font-size:9.2px;font-weight:400;color:#d8ffd8;transform:scaleX(1.1600);letter-spacing:0.238px;">project</span>
<div style="left:5px;top:421px;width:1356px;height:232px;border:1px solid #8e8e8e;border-bottom-color:#a0a0a0;background:#f4f4f4;"></div>
<div style="left:7px;top:424px;width:674px;height:225px;border:1px solid #9c9c9c;"></div>
<div style="left:682px;top:424px;width:674px;height:225px;border:1px solid #9c9c9c;"></div>
<svg style="left:0;top:398px" width="340" height="28" viewBox="0 398 340 28">
<path d="M7.5 421.5 L12.5 405 Q13 403.5 14.5 403.5 H86.5 L89 405.5" fill="#f4f4f4" stroke="#8e8e8e" stroke-width="1"/>
<path d="M317 403.5 H228 " fill="none"/>
<path d="M225.5 405 Q226.5 403.5 228 403.5 H318 Q319.6 403.5 320 405 L324.8 421.5 H230 Z" fill="#f4f4f4" stroke="#8e8e8e" stroke-width="1"/>
<path d="M87.2 422.6 L92.6 404 Q93.2 402.5 95 402.5 H221 Q222.8 402.5 223.4 404 L229 422.6 Z" fill="#f4f4f4"/>
<path d="M87.6 421.5 L92.6 404 Q93.2 402.5 95 402.5 H221 Q222.8 402.5 223.4 404 L228.4 421.5" fill="none" stroke="#8e8e8e" stroke-width="1"/>
</svg>
<span class="t" style="left:16.71px;top:404.87px;font-size:12.5px;font-weight:400;color:#111;transform:scaleX(1.1159);">Main tasks</span>
<span class="t" style="left:95.92px;top:403.87px;font-size:12.5px;font-weight:400;color:#111;transform:scaleX(1.1007);">Common renamings</span>
<span class="t" style="left:231.30px;top:404.87px;font-size:12.5px;font-weight:400;color:#111;transform:scaleX(1.1412);">Tag audio file</span>
<div class="cb" style="left:42px;top:465px;width:12px;height:12px;"></div>
<span class="t" style="left:58.82px;top:463.77px;font-size:12.5px;font-weight:400;color:#000;transform:scaleX(1.0997);">Numbers</span>
<div class="cmb" style="left:121px;top:460px;width:353.5px;height:20.5px;"></div><span class="t" style="left:125.86px;top:462.32px;font-size:11.5px;font-weight:400;color:#a4a4a4;transform:scaleX(1.0876);">Arrange</span><div class="tri" style="left:463.6px;top:468.75px;width:0px;height:0px;border-left-width:4.3px;border-right-width:4.3px;border-top-width:4.3px;"></div>
<span class="t" style="left:480.86px;top:462.52px;font-size:11.5px;font-weight:400;color:#a4a4a4;transform:scaleX(1.0815);">Position:</span>
<div style="left:535px;top:460px;width:42.5px;height:21.5px;background:#ffffff;border:1px solid #8a8a8a;"></div><div style="left:561.5px;top:461px;width:15px;height:19.5px;background:#f4f4f4;border:1px solid #9a9a9a;border-width:0 1px 1px 1px;"></div><div style="left:561.5px;top:470.25px;width:15px;height:1.5px;background:#9a9a9a;"></div><div style="left:567.0px;top:464px;width:0px;height:0px;border-left:2.2px solid transparent;border-right:2.2px solid transparent;border-bottom:2.4px solid #8a8a8a;"></div><div style="left:567.0px;top:475.0px;width:0px;height:0px;border-left:2.2px solid transparent;border-right:2.2px solid transparent;border-top:2.4px solid #8a8a8a;"></div><span class="t" style="left:554.13px;top:462.71px;font-size:10.5px;font-weight:400;color:#a4a4a4;transform:scaleX(1.0000);">1</span>
<span class="t" style="left:583.34px;top:462.52px;font-size:11.5px;font-weight:400;color:#a4a4a4;transform:scaleX(1.1415);">Zeros:</span>
<div style="left:627px;top:460px;width:42.5px;height:21.5px;background:#ffffff;border:1px solid #8a8a8a;"></div><div style="left:653.5px;top:461px;width:15px;height:19.5px;background:#f4f4f4;border:1px solid #9a9a9a;border-width:0 1px 1px 1px;"></div><div style="left:653.5px;top:470.25px;width:15px;height:1.5px;background:#9a9a9a;"></div><div style="left:659.0px;top:464px;width:0px;height:0px;border-left:2.2px solid transparent;border-right:2.2px solid transparent;border-bottom:2.4px solid #8a8a8a;"></div><div style="left:659.0px;top:475.0px;width:0px;height:0px;border-left:2.2px solid transparent;border-right:2.2px solid transparent;border-top:2.4px solid #8a8a8a;"></div><span class="t" style="left:646.63px;top:462.71px;font-size:10.5px;font-weight:400;color:#a4a4a4;transform:scaleX(1.0000);">1</span>
<div class="sep" style="left:39px;top:522px;width:631px;height:1px;"></div>
<div class="cb" style="left:42px;top:528px;width:12px;height:12px;"></div>
<span class="t" style="left:58.84px;top:526.87px;font-size:12.5px;font-weight:400;color:#000;transform:scaleX(1.0624);">Normalize</span>
<div class="cmb" style="left:125px;top:522.5px;width:298.5px;height:21px;"></div><span class="t" style="left:129.77px;top:525.32px;font-size:11.5px;font-weight:400;color:#a4a4a4;transform:scaleX(1.0765);">Remove accents</span><div class="tri" style="left:412.6px;top:531.5px;width:0px;height:0px;border-left-width:4.3px;border-right-width:4.3px;border-top-width:4.3px;"></div>
<div class="sep" style="left:39px;top:585px;width:631px;height:1px;"></div>
<div class="cb" style="left:42px;top:591px;width:12px;height:12px;background:#fff;"></div>
<svg style="left:43px;top:592px" width="10" height="10" viewBox="0 0 10 10"><path d="M1.6 4.6 L4 7.6 L8.6 1.4" stroke="#000" stroke-width="2" fill="none"/></svg>
<span class="t" style="left:58.83px;top:590.07px;font-size:12.5px;font-weight:400;color:#000;transform:scaleX(1.0807);">Replace</span>
<div class="inp" style="left:109.5px;top:585.5px;width:250px;height:21px;"></div>
<span class="t" style="left:112.93px;top:588.62px;font-size:11.5px;font-weight:400;color:#000;transform:scaleX(1.1600);letter-spacing:0.343px;">([0-9 -]+)([a-zA-Z ]+)( - )([a-zA-Z ]+)</span>
<span class="t" style="left:364.71px;top:590.07px;font-size:12.5px;font-weight:400;color:#000;transform:scaleX(1.1098);">with</span>
<div class="inp" style="left:394px;top:585.5px;width:249.5px;height:21px;"></div>
<span class="t" style="left:397.93px;top:588.62px;font-size:11.5px;font-weight:400;color:#000;transform:scaleX(1.1600);letter-spacing:0.239px;">$2 - $1$4</span>
<div style="left:649.5px;top:589px;width:18px;height:15px;background:linear-gradient(#fcfcfc,#e2e2e2);border:1px solid #8e8e8e;"></div>
<div class="trib" style="left:656.4px;top:594.6px;width:0px;height:0px;border-left-width:4.4px;border-right-width:4.4px;border-top-width:4.6px;"></div>
<div class="cb" style="left:717px;top:465px;width:12px;height:12px;"></div>
<span class="t" style="left:733.69px;top:463.77px;font-size:12.5px;font-weight:400;color:#000;transform:scaleX(1.1579);">File attributes</span>
<div class="cmb" style="left:826.5px;top:460px;width:119px;height:20.5px;"></div><span class="t" style="left:831.78px;top:462.32px;font-size:11.5px;font-weight:400;color:#a4a4a4;transform:scaleX(1.0522);">Readable</span><div class="tri" style="left:934px;top:468.75px;width:0px;height:0px;border-left-width:4.3px;border-right-width:4.3px;border-top-width:4.3px;"></div>
<div class="cmb" style="left:954.5px;top:460px;width:119px;height:20.5px;"></div><span class="t" style="left:960.37px;top:462.32px;font-size:11.5px;font-weight:400;color:#a4a4a4;transform:scaleX(1.0613);">Enabled</span><div class="tri" style="left:1062.6px;top:468.75px;width:0px;height:0px;border-left-width:4.3px;border-right-width:4.3px;border-top-width:4.3px;"></div>
<div class="cmb" style="left:1080px;top:463px;width:19px;height:15px;"></div>
<div class="tri" style="left:1087.6px;top:469px;width:0px;height:0px;border-left-width:4.3px;border-right-width:4.3px;border-top-width:4.3px;"></div>
<div class="sep" style="left:714px;top:522px;width:631px;height:1px;"></div>
<div class="cb" style="left:717px;top:527px;width:12px;height:12px;"></div>
<span class="t" style="left:733.72px;top:525.87px;font-size:12.5px;font-weight:400;color:#000;transform:scaleX(1.0960);">Random name</span>
<svg style="left:828.8px;top:526px" width="14" height="14" viewBox="-7 -7 14 14"><circle r="5.6" fill="#fbfbfb" stroke="#8c8c8c" stroke-width="1"/><circle r="3.2" fill="#a6a6a6"/></svg>
<span class="t" style="left:846.95px;top:525.02px;font-size:11.5px;font-weight:400;color:#a4a4a4;transform:scaleX(1.1137);">with length:</span>
<div style="left:919px;top:522.5px;width:42.5px;height:20.5px;background:#ffffff;border:1px solid #8a8a8a;"></div><div style="left:945.5px;top:523.5px;width:15px;height:18.5px;background:#f4f4f4;border:1px solid #9a9a9a;border-width:0 1px 1px 1px;"></div><div style="left:945.5px;top:532.25px;width:15px;height:1.5px;background:#9a9a9a;"></div><div style="left:951.0px;top:526.5px;width:0px;height:0px;border-left:2.2px solid transparent;border-right:2.2px solid transparent;border-bottom:2.4px solid #8a8a8a;"></div><div style="left:951.0px;top:536.5px;width:0px;height:0px;border-left:2.2px solid transparent;border-right:2.2px solid transparent;border-top:2.4px solid #8a8a8a;"></div><span class="t" style="left:937.63px;top:524.71px;font-size:10.5px;font-weight:400;color:#a4a4a4;transform:scaleX(1.0000);">1</span>
<svg style="left:966.4px;top:526px" width="14" height="14" viewBox="-7 -7 14 14"><circle r="5.6" fill="#fbfbfb" stroke="#8c8c8c" stroke-width="1"/></svg>
<span class="t" style="left:983.75px;top:525.02px;font-size:11.5px;font-weight:400;color:#a4a4a4;transform:scaleX(1.1193);">Original length</span>
<div class="sep" style="left:714px;top:583px;width:631px;height:1px;"></div>
<div class="cb" style="left:717px;top:589px;width:12px;height:12px;"></div>
<span class="t" style="left:733.71px;top:587.67px;font-size:12.5px;font-weight:400;color:#000;transform:scaleX(1.1113);">Change case</span>
<div class="cmb" style="left:821.5px;top:583.5px;width:299.5px;height:21.5px;"></div><span class="t" style="left:826.76px;top:586.22px;font-size:11.5px;font-weight:400;color:#a4a4a4;transform:scaleX(1.0895);">Uppercase</span><div class="tri" style="left:1109.6px;top:592.75px;width:0px;height:0px;border-left-width:4.3px;border-right-width:4.3px;border-top-width:4.3px;"></div>
<div style="left:5px;top:652.5px;width:1356px;height:75px;border:1px solid #ffb1b1;border-top-color:#f0a8a8;"></div>
<svg style="left:18px;top:668px" width="44" height="44" viewBox="0 0 44 44">
<defs><radialGradient id="ig" cx="0.5" cy="0.92" r="0.55"><stop offset="0" stop-color="#0b7cf0"/><stop offset="0.6" stop-color="#0a5bbd"/><stop offset="1" stop-color="#0a4fa8"/></radialGradient>
<linearGradient id="ih" x1="0" y1="0" x2="0" y2="1"><stop offset="0" stop-color="#8cb3e2"/><stop offset="1" stop-color="#4a84cc"/></linearGradient>
<clipPath id="ic"><circle cx="22.1" cy="21.9" r="20.2"/></clipPath></defs>
<circle cx="22.1" cy="21.9" r="21" fill="#0b4796"/>
<circle cx="22.1" cy="21.9" r="20.2" fill="url(#ig)"/>
<path d="M0 0 H44 V22.4 Q32 27.6 2 24.6 Z" fill="url(#ih)" clip-path="url(#ic)"/>
<circle cx="22.1" cy="21.9" r="20.4" fill="none" stroke="#1a5cb0" stroke-width="1" opacity="0.7"/>
<circle cx="21.9" cy="11.6" r="3.1" fill="#fff"/>
<path d="M15.9 17.8 H25.4 V32.9 H27.8 V35.4 H15.9 V32.9 H19 V20.6 H15.9 Z" fill="#fff"/>
<path d="M19 26 H25.4 V32.9 H19 Z" fill="#eaeaea"/></svg>
<span class="t" style="left:69.12px;top:682.19px;font-size:11px;font-weight:700;color:#000;transform:scaleX(0.9962);-webkit-text-stroke:0.3px currentColor;">13 files</span>
</div>
</body></html>
